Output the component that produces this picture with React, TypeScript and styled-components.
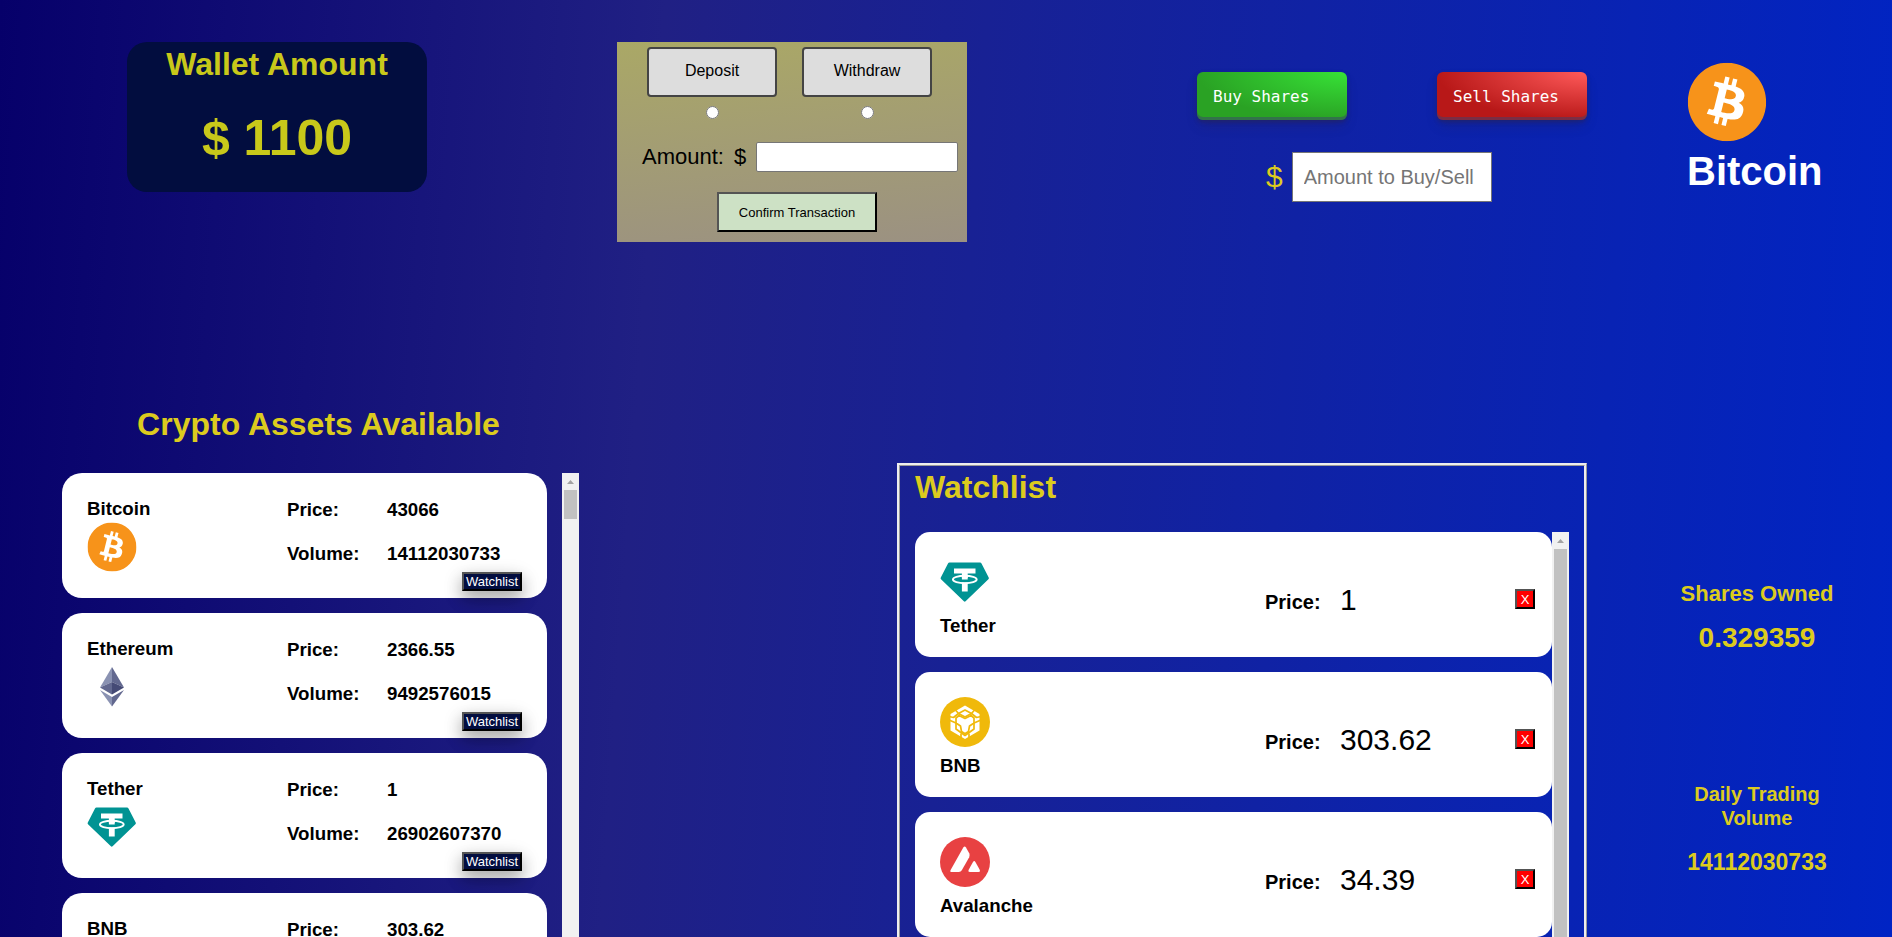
import React from "react";
import styled, { createGlobalStyle } from "styled-components";
import { SiBitcoin } from "react-icons/si";

const GOLD = "#dccb1e";
const NAVY = "#020d3f";

const GlobalStyle = createGlobalStyle`
  * { box-sizing: border-box; }
  body {
    margin: 0;
    font-family: Arial, "Liberation Sans", sans-serif;
    color: #000;
  }
  h1, h2, h3, p, ul { margin: 0; }
  button, input { font-family: inherit; }
`;

const Page = styled.div`
  display: flex;
  flex-direction: column;
  height: 100vh;
  overflow: hidden;
  background: linear-gradient(94deg, #06006a 0%, #202084 34%, #0024c4 100%);
`;

const Header = styled.header`
  display: grid;
  grid-template-columns: 617fr 580fr 490fr 205fr;
  align-items: start;
  padding-top: 42px;
`;

const Wallet = styled.section`
  width: 300px;
  height: 150px;
  margin-left: 127px;
  border-radius: 20px;
  background: ${NAVY};
  color: #c8c81a;
  text-align: center;
`;

const WalletTitle = styled.h1`
  padding-top: 4px;
  font-size: 32px;
  line-height: 37px;
`;

const WalletValue = styled.p`
  margin-top: 26px;
  font-size: 50px;
  line-height: 58px;
  font-weight: bold;
`;

const TransferPanel = styled.form`
  width: 350px;
  height: 200px;
  padding: 5px 9px 0 25px;
  background: linear-gradient(175deg, #aaa866, #9b9182);
`;

const Choices = styled.div`
  display: flex;
  gap: 25px;
  padding-left: 5px;
`;

const Choice = styled.div`
  display: flex;
  flex-direction: column;
  align-items: center;
  gap: 9px;
`;

const ChoiceLabel = styled.label`
  width: 130px;
  height: 50px;
  border: 2px solid #444;
  border-radius: 4px;
  background: #ddd;
  font-size: 16px;
  line-height: 44px;
  text-align: center;
`;

const Radio = styled.input`
  width: 13px;
  height: 13px;
  margin: 0;
`;

const AmountRow = styled.div`
  display: flex;
  align-items: center;
  gap: 10px;
  margin-top: 23px;
  font-size: 22px;
`;

const AmountInput = styled.input`
  flex: 1;
  min-width: 0;
  height: 30px;
  border: 1px solid #767676;
  border-radius: 2px;
`;

const ConfirmButton = styled.button`
  display: block;
  width: 160px;
  height: 40px;
  margin: 20px 0 0 75px;
  border: 2px outset #000;
  background: #cde1c5;
  color: #000;
  font-size: 13px;
`;

const Trade = styled.section`
  width: 390px;
  padding-top: 30px;
`;

const TradeButtons = styled.div`
  display: flex;
  justify-content: space-between;
`;

const TradeButton = styled.button<{ $from: string; $to: string }>`
  width: 150px;
  height: 48px;
  padding: 0 16px;
  border: 0;
  border-radius: 6px;
  background: radial-gradient(100% 100% at 100% 0, ${(p) => p.$from} 0, ${(p) => p.$to} 100%);
  box-shadow: rgba(45, 35, 66, 0.4) 0 2px 4px, rgba(45, 35, 66, 0.3) 0 7px 13px -3px,
    rgba(58, 65, 111, 0.5) 0 -3px 0 inset;
  color: #fff;
  font-family: "DejaVu Sans Mono", monospace;
  font-size: 16px;
  text-align: left;
`;

const TradeAmount = styled.div`
  display: flex;
  align-items: center;
  gap: 9px;
  margin: 32px 0 0 69px;
  color: ${GOLD};
  font-size: 30px;
`;

const TradeInput = styled.input`
  width: 200px;
  height: 50px;
  padding: 0 11px;
  border: 1px solid #767676;
  font-size: 20px;

  &::placeholder { color: #757575; }
`;

const Coin = styled.section`
  padding-top: 20px;
  color: #fff;
`;

const CoinTitle = styled.h1`
  margin-top: 6px;
  font-size: 40px;
  line-height: 46px;
`;

const Body = styled.main`
  flex: 1;
  min-height: 0;
  display: grid;
  grid-template-columns: 897fr 690fr 305fr;
  margin-top: 164px;
`;

const Assets = styled.section`
  display: flex;
  flex-direction: column;
  width: 517px;
  min-height: 0;
  margin-left: 62px;
`;

const SectionTitle = styled.h1<{ $centered?: boolean }>`
  padding-right: ${(p) => (p.$centered ? "4px" : "0")};
  color: ${GOLD};
  font-size: 32px;
  line-height: 37px;
  text-align: ${(p) => (p.$centered ? "center" : "left")};
`;

const Scroller = styled.div<{ $top: number; $gap: number }>`
  flex: 1;
  min-height: 0;
  display: flex;
  gap: ${(p) => p.$gap}px;
  margin-top: ${(p) => p.$top}px;
`;

const CardList = styled.ul`
  flex: 1;
  display: flex;
  flex-direction: column;
  gap: 15px;
  padding: 0;
  list-style: none;
`;

const AssetCard = styled.li`
  flex: none;
  display: grid;
  grid-template-columns: 200px 100px 1fr;
  height: 125px;
  padding: 25px 25px 0;
  border-radius: 20px;
  background: #fff;
`;

const AssetName = styled.div`
  display: flex;
  flex-direction: column;
  gap: 2px;
`;

const Figures = styled.div`
  display: flex;
  flex-direction: column;
  gap: 22px;
  padding-top: 1px;
`;

const CardText = styled.h3`
  line-height: 22px;
`;

const WatchButton = styled.button`
  justify-self: end;
  grid-column: 3;
  width: 60px;
  height: 19px;
  margin-top: -7px;
  padding: 0;
  border: 2px outset #000;
  background: ${NAVY};
  box-shadow: 0 8px 16px rgba(0, 0, 0, 0.22), 0 6px 20px rgba(0, 0, 0, 0.2);
  color: #fff;
  font-size: 13px;
  line-height: 15px;
  white-space: nowrap;
`;

const Watchlist = styled.section`
  display: flex;
  flex-direction: column;
  min-height: 0;
  margin-top: 57px;
  padding: 3px 15px 0;
  border: 3px ridge #eee;
  border-bottom: 0;
`;

const WatchCard = styled.li`
  flex: none;
  display: grid;
  grid-template-columns: 1fr 75px 175px 20px;
  align-items: center;
  height: 125px;
  padding: 0 17px 0 25px;
  border-radius: 15px;
  background: #fff;
`;

const WatchName = styled.div`
  display: flex;
  flex-direction: column;
  gap: 8px;
  padding-top: 5px;
`;

const WatchLabel = styled.h3`
  padding-top: 15px;
  font-size: 20px;
  line-height: 22px;
`;

const WatchPrice = styled.p`
  padding-top: 11px;
  font-size: 30px;
  line-height: 34px;
`;

const RemoveButton = styled.button`
  width: 20px;
  height: 20px;
  margin-top: 9px;
  padding: 0;
  border: 2px outset #000;
  background: #f00;
  color: #fff;
  font-size: 13px;
  line-height: 15px;
`;

const Bar = styled.div`
  width: 17px;
  display: flex;
  flex-direction: column;
  align-items: center;
  overflow: hidden;
  background: #f1f1f1;
`;

const BarArrow = styled.svg`
  flex: none;
  width: 17px;
  height: 17px;
`;

const BarThumb = styled.div<{ $length?: number }>`
  flex: ${(p) => (p.$length ? `0 0 ${p.$length}px` : "1")};
  width: 13px;
  background: #c1c1c1;
`;

const Stats = styled.aside`
  width: 170px;
  margin-left: 85px;
  padding-top: 176px;
  color: ${GOLD};
  font-weight: bold;
  text-align: center;
`;

const Stat = styled.div`
  margin-bottom: 128px;
`;

const StatLabel = styled.h2<{ $size: number }>`
  font-size: ${(p) => p.$size}px;
  line-height: 24px;
`;

const StatValue = styled.p<{ $size: number }>`
  margin-top: 16px;
  font-size: ${(p) => p.$size}px;
  line-height: 32px;
`;

const Disc = styled.span<{ $size: number; $color: string }>`
  display: block;
  width: ${(p) => p.$size}px;
  height: ${(p) => p.$size}px;
  color: ${(p) => p.$color};

  svg {
    display: block;
    width: 100%;
    height: 100%;
  }

  svg svg {
    width: 49px;
    height: 49px;
  }
`;

function BitcoinIcon({ size = 50 }: { size?: number }) {
  return (
    <Disc $size={size} $color="#f7931a">
      <svg viewBox="0 0 50 50" aria-hidden="true">
        <circle cx="25" cy="25" r="22" fill="#fff" />
        <SiBitcoin x="0.5" y="0.5" width="49" height="49" />
      </svg>
    </Disc>
  );
}

function TetherIcon() {
  return (
    <Disc $size={50} $color="#009393">
      <svg viewBox="0 0 50 50" aria-hidden="true">
        <path
          d="M9.500 5.500H40Q41 5.500 41.500 6.500L48.700 20.500Q49.200 21.500 48.400 22.300L25.600 44.300Q24.700 45 23.900 44.300L1 22.300Q0.300 21.500 0.800 20.500L8 6.500Q8.500 5.500 9.500 5.500Z"
          fill="currentColor"
        />
        <path d="M14 11.500H35.500V16.500H27.700V21H21.900V16.500H14Z" fill="#fff" />
        <ellipse cx="24.800" cy="22.500" rx="11.900" ry="3.700" fill="none" stroke="#fff" strokeWidth="1.900" />
        <path d="M21.900 18H27.700V22.500H21.900ZM21.900 25.500H27.700V34.500H21.900Z" fill="#fff" />
      </svg>
    </Disc>
  );
}

function EthereumIcon() {
  return (
    <Disc $size={50} $color="#62688f">
      <svg viewBox="0 0 50 50" aria-hidden="true">
        <path d="M25 5 13 25.5 25 20Z" fill="#8a92b2" />
        <path d="M25 5 37 25.5 25 20Z" fill="#62688f" />
        <path d="M13 25.5 25 20V32.6Z" fill="#62688f" />
        <path d="M37 25.5 25 20V32.6Z" fill="#454a75" />
        <path d="M13 28 25 35V44.5Z" fill="#8a92b2" />
        <path d="M37 28 25 35V44.5Z" fill="#62688f" />
      </svg>
    </Disc>
  );
}

function BnbIcon() {
  return (
    <Disc $size={50} $color="#f0b90b">
      <svg viewBox="0 0 50 50" aria-hidden="true">
        <circle cx="25" cy="25" r="25" fill="currentColor" />
        <path d="M25 8.500 39.500 17V33.500L25 42 10.500 33.500V17Z" fill="#fff" />
        <g fill="none" stroke="currentColor" strokeWidth="1.700" strokeLinejoin="round">
          <path d="M18.500 16.500 25 13 31.500 16.500 25 20Z" />
          <path d="M15 12.500 18.500 16.500 13.500 20.500 9 19.500M35 12.500 31.500 16.500 36.500 20.500 41 19.500" />
          <path d="M16 21 19 18.500 25 21.500 31 18.500 34 21V26L29.500 29 28.500 34.500 25 36.800 21.500 34.500 20.500 29 16 26Z" />
          <path d="M9 23 16 26V32L25 38.500 34 32V26L41 23" />
          <path d="M21 36.500V42M29 36.500V42" />
        </g>
      </svg>
    </Disc>
  );
}

function AvalancheIcon() {
  return (
    <Disc $size={50} $color="#e84142">
      <svg viewBox="0 0 50 50" aria-hidden="true">
        <circle cx="25" cy="25" r="25" fill="currentColor" />
        <path
          d="M23.300 10.500Q24.700 8.500 26 10.500L29.200 16.200Q30.200 18.200 29.200 20.300L21.800 33.200Q20.800 34.900 18.800 35H11.600Q9.600 34.900 10.600 32.900Z"
          fill="#fff"
        />
        <path
          d="M33 24.900Q34.200 23.200 35.400 24.900L39.700 32.700Q40.600 34.900 38.600 35H29.800Q27.800 34.900 28.700 32.700Z"
          fill="#fff"
        />
      </svg>
    </Disc>
  );
}

function ScrollBar({ thumb }: { thumb?: number }) {
  return (
    <Bar aria-hidden="true">
      <BarArrow viewBox="0 0 17 17">
        <path d="M5 11 8.500 7 12 11Z" fill="#a3a3a3" />
      </BarArrow>
      <BarThumb $length={thumb} />
    </Bar>
  );
}

const assets = [
  { name: "Bitcoin", icon: <BitcoinIcon />, price: "43066", volume: "14112030733" },
  { name: "Ethereum", icon: <EthereumIcon />, price: "2366.55", volume: "9492576015" },
  { name: "Tether", icon: <TetherIcon />, price: "1", volume: "26902607370" },
  { name: "BNB", icon: <BnbIcon />, price: "303.62", volume: "" },
];

const watched = [
  { name: "Tether", icon: <TetherIcon />, price: "1" },
  { name: "BNB", icon: <BnbIcon />, price: "303.62" },
  { name: "Avalanche", icon: <AvalancheIcon />, price: "34.39" },
];

export default function App() {
  return (
    <>
      <GlobalStyle />
      <Page>
        <Header>
          <Wallet>
            <WalletTitle>Wallet Amount</WalletTitle>
            <WalletValue>$ 1100</WalletValue>
          </Wallet>
          <TransferPanel onSubmit={(e) => e.preventDefault()}>
            <Choices>
              <Choice>
                <ChoiceLabel htmlFor="deposit">Deposit</ChoiceLabel>
                <Radio type="radio" id="deposit" name="transfer" />
              </Choice>
              <Choice>
                <ChoiceLabel htmlFor="withdraw">Withdraw</ChoiceLabel>
                <Radio type="radio" id="withdraw" name="transfer" />
              </Choice>
            </Choices>
            <AmountRow>
              <label htmlFor="amount">Amount:</label>
              <span>$</span>
              <AmountInput id="amount" type="text" />
            </AmountRow>
            <ConfirmButton type="submit">Confirm Transaction</ConfirmButton>
          </TransferPanel>
          <Trade>
            <TradeButtons>
              <TradeButton type="button" $from="#37e237" $to="#2aa224">Buy Shares</TradeButton>
              <TradeButton type="button" $from="#ff5a5a" $to="#b81818">Sell Shares</TradeButton>
            </TradeButtons>
            <TradeAmount>
              <label htmlFor="shares">$</label>
              <TradeInput id="shares" type="text" placeholder="Amount to Buy/Sell" />
            </TradeAmount>
          </Trade>
          <Coin>
            <BitcoinIcon size={80} />
            <CoinTitle>Bitcoin</CoinTitle>
          </Coin>
        </Header>
        <Body>
          <Assets>
            <SectionTitle $centered>Crypto Assets Available</SectionTitle>
            <Scroller $top={30} $gap={15}>
              <CardList>
                {assets.map((a) => (
                  <AssetCard key={a.name}>
                    <AssetName>
                      <CardText>{a.name}</CardText>
                      {a.icon}
                    </AssetName>
                    <Figures>
                      <CardText>Price:</CardText>
                      {a.volume && <CardText>Volume:</CardText>}
                    </Figures>
                    <Figures>
                      <CardText>{a.price}</CardText>
                      {a.volume && <CardText>{a.volume}</CardText>}
                    </Figures>
                    <WatchButton type="button">Watchlist</WatchButton>
                  </AssetCard>
                ))}
              </CardList>
              <ScrollBar thumb={29} />
            </Scroller>
          </Assets>
          <Watchlist>
            <SectionTitle>Watchlist</SectionTitle>
            <Scroller $top={26} $gap={0}>
              <CardList>
                {watched.map((w) => (
                  <WatchCard key={w.name}>
                    <WatchName>
                      {w.icon}
                      <CardText>{w.name}</CardText>
                    </WatchName>
                    <WatchLabel>Price:</WatchLabel>
                    <WatchPrice>{w.price}</WatchPrice>
                    <RemoveButton type="button">X</RemoveButton>
                  </WatchCard>
                ))}
              </CardList>
              <ScrollBar />
            </Scroller>
          </Watchlist>
          <Stats>
            <Stat>
              <StatLabel $size={22}>Shares Owned</StatLabel>
              <StatValue $size={28}>0.329359</StatValue>
            </Stat>
            <Stat>
              <StatLabel $size={20}>Daily Trading Volume</StatLabel>
              <StatValue $size={23}>14112030733</StatValue>
            </Stat>
          </Stats>
        </Body>
      </Page>
    </>
  );
}
